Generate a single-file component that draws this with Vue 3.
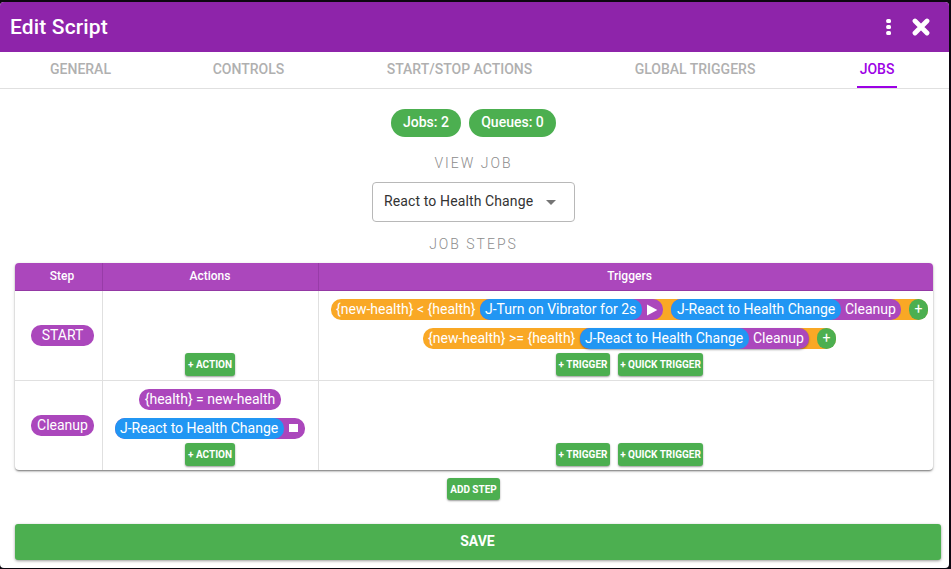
<script setup>
const tabs = [
  { label: 'GENERAL', name: 'general' },
  { label: 'CONTROLS', name: 'controls' },
  { label: 'START/STOP ACTIONS', name: 'actions' },
  { label: 'GLOBAL TRIGGERS', name: 'triggers' },
  { label: 'JOBS', name: 'jobs' },
]
const activeTab = 'jobs'
</script>

<template>
  <div class="backdrop">
    <section class="dialog">
      <header class="toolbar">
        <h1>Edit Script</h1>
        <svg class="dots" viewBox="0 0 6 18" width="6" height="18">
          <rect x="1.2" y="1" width="4.8" height="4.1" rx="1.5" />
          <rect x="1.2" y="7" width="4.8" height="4.1" rx="1.5" />
          <rect x="1.2" y="13" width="4.8" height="4.1" rx="1.5" />
        </svg>
        <svg class="close" viewBox="0 0 18 18" width="18" height="18">
          <path d="M3 3 15 15M15 3 3 15" />
        </svg>
      </header>

      <nav class="tabs">
        <div v-for="tab in tabs" :key="tab.name" class="tab" :class="[tab.name, { active: tab.name === activeTab }]">
          <span>{{ tab.label }}</span>
        </div>
      </nav>

      <main class="content">
        <div class="chips">
          <span class="chip chip-jobs">Jobs: 2</span>
          <span class="chip chip-queues">Queues: 0</span>
        </div>
        <h2 class="view-title">VIEW JOB</h2>
        <div class="select">
          <span>React to Health Change</span>
          <svg viewBox="0 0 10 5" width="10" height="5"><path d="M0 0h10L5 5z" /></svg>
        </div>
        <h2 class="steps-title">JOB STEPS</h2>

        <div class="table">
          <div class="row head">
            <div class="cell">Step</div>
            <div class="cell">Actions</div>
            <div class="cell">Triggers</div>
          </div>

          <div class="row">
            <div class="cell step"><span class="pill purple step-pill">START</span></div>
            <div class="cell stack">
              <button class="btn action-btn">+ ACTION</button>
            </div>
            <div class="cell stack">
              <div class="pill orange rule-one">
                <span class="condition">{new-health} &lt; {health}</span>
                <span class="pill purple vibrate">
                  <span class="pill blue">J-Turn on Vibrator for 2s</span>
                  <svg class="play" viewBox="0 0 11 12" width="11" height="12"><path d="M0 0.5v11L10.3 6z" /></svg>
                </span>
                <span class="pill purple react">
                  <span class="pill blue">J-React to Health Change</span>
                  <span class="target">Cleanup</span>
                </span>
                <span class="pill green plus">+</span>
              </div>
              <div class="pill orange rule-two">
                <span class="condition">{new-health} &gt;= {health}</span>
                <span class="pill purple react raised">
                  <span class="pill blue">J-React to Health Change</span>
                  <span class="target">Cleanup</span>
                </span>
                <span class="pill green plus">+</span>
              </div>
              <div class="buttons">
                <button class="btn trigger-btn">+ TRIGGER</button>
                <button class="btn quick-btn">+ QUICK TRIGGER</button>
              </div>
            </div>
          </div>

          <div class="row last">
            <div class="cell step"><span class="pill purple step-pill">Cleanup</span></div>
            <div class="cell stack">
              <span class="pill purple assign">{health} = new-health</span>
              <span class="pill purple stop-job">
                <span class="pill blue">J-React to Health Change</span>
                <i class="stop"></i>
              </span>
              <button class="btn action-btn">+ ACTION</button>
            </div>
            <div class="cell stack">
              <div class="buttons">
                <button class="btn trigger-btn">+ TRIGGER</button>
                <button class="btn quick-btn">+ QUICK TRIGGER</button>
              </div>
            </div>
          </div>
        </div>

        <button class="btn add-step">ADD STEP</button>
        <button class="save">SAVE</button>
      </main>
    </section>
  </div>
</template>

<style>
body {
  background: #0c0710;
  overflow: hidden;
}
</style>

<style scoped>
* {
  box-sizing: border-box;
}
.backdrop {
  width: 951px;
  height: 569px;
  padding: 2px 2px 1px 0;
  background: #0c0710;
  font-family: Roboto, sans-serif;
}
.dialog {
  height: 566px;
  background: #fff;
  border-radius: 4px;
  overflow: hidden;
}
.toolbar {
  display: flex;
  align-items: center;
  height: 50px;
  padding: 0 19px 0 10px;
  background: #8e24aa;
  color: #fff;
}
h1 {
  flex: 1;
  margin: 0;
  font-size: 21px;
  font-weight: 500;
  letter-spacing: 0.15px;
  line-height: 50px;
}
.dots {
  margin-right: 21px;
  fill: #fff;
}
.close {
  fill: none;
  stroke: #fff;
  stroke-width: 4.8;
  stroke-linecap: round;
}
.tabs {
  display: flex;
  height: 37px;
  border-bottom: 1px solid #e0e0e0;
}
.tab {
  display: flex;
  justify-content: center;
  color: #b0b0b0;
  font-size: 14px;
  font-weight: 500;
  line-height: 34px;
  white-space: nowrap;
}
.general { width: 161px; }
.controls { width: 175px; }
.actions { width: 247px; }
.triggers { width: 224px; }
.jobs { width: 140px; }
.active span {
  width: 40px;
  height: 36px;
  text-align: center;
  color: #9c00e5;
  border-bottom: 2px solid #9c00e5;
}
.content {
  display: flex;
  flex-direction: column;
  align-items: center;
  padding: 20px 8px 8px 15px;
}
.chips {
  display: flex;
  gap: 8px;
  margin-right: 9px;
}
.chip {
  height: 28px;
  border-radius: 14px;
  background: #4caf50;
  color: #fff;
  font-size: 14px;
  font-weight: 500;
  line-height: 27px;
  text-align: center;
}
.chip-jobs { width: 70px; }
.chip-queues { width: 87px; }
h2 {
  margin: 0;
  color: #8c8c8c;
  font-size: 14px;
  font-weight: 300;
  letter-spacing: 2px;
  line-height: 20px;
}
.view-title {
  margin: 16px 9px 9px 0;
}
.select {
  display: flex;
  align-items: center;
  justify-content: space-between;
  width: 203px;
  height: 40px;
  margin-right: 9px;
  padding: 0 18px 2px 11px;
  border: 1px solid #b8b8b8;
  border-radius: 4px;
  color: #333;
  font-size: 14px;
  letter-spacing: 0.12px;
}
.select svg {
  margin-top: 3px;
  fill: #757575;
}
.steps-title {
  margin: 12px 9px 9px 0;
}
.table {
  align-self: flex-start;
  width: 918px;
  border-radius: 4px;
  box-shadow: 0 2px 2px -1px rgba(0, 0, 0, 0.3), 0 1px 2px rgba(0, 0, 0, 0.28), 0 1px 4px rgba(0, 0, 0, 0.1);
}
.row {
  display: grid;
  grid-template-columns: 88px 216px 614px;
  height: 90px;
  border-bottom: 1px solid #e0e0e0;
}
.row.last {
  height: 89px;
  border-bottom: 0;
}
.row.head {
  height: 28px;
  border-bottom: 1px solid #9439a4;
  border-radius: 4px 4px 0 0;
  background: #ab47bc;
  color: #fff;
  font-size: 12px;
  font-weight: 500;
  line-height: 26px;
  text-align: center;
}
.cell {
  border-right: 1px solid #e0e0e0;
}
.head .cell {
  padding-right: 1px;
  border-right-color: #983ca8;
}
.head .cell:nth-child(odd) {
  padding: 0 0 0 7px;
}
.cell:last-child {
  border-right: 0;
}
.step {
  display: flex;
  align-items: center;
  justify-content: center;
  padding-left: 8px;
}
.stack {
  display: flex;
  flex-direction: column;
  align-items: center;
  justify-content: flex-end;
  gap: 8px;
  padding: 0 1px 4px 0;
}
.stack:last-child {
  padding: 0 0 4px 7px;
}
.stack > :last-child {
  margin-top: -4px;
}
.pill {
  display: flex;
  height: 21px;
  border-radius: 10px;
  color: #fff;
  font-size: 14px;
  letter-spacing: 0;
  line-height: 20px;
  white-space: nowrap;
}
.purple { background: #ab47bc; }
.blue { background: #2196f3; }
.orange { background: #f9a825; }
.green { background: #4caf50; }
.step-pill {
  width: 63px;
  justify-content: center;
}
.condition {
  padding-left: 5px;
}
.rule-one { width: 597px; }
.rule-two { width: 413px; }
.rule-one .condition { width: 149px; }
.rule-two .condition { width: 157px; }
.vibrate {
  width: 183px;
  margin-right: 8px;
}
.vibrate .blue {
  width: 162px;
  padding-left: 5px;
}
.react {
  width: 230px;
  margin-right: 8px;
}
.react .blue,
.stop-job .blue {
  width: 169px;
  padding-left: 5px;
}
.rule-two .react {
  width: 229px;
}
.rule-one .react .blue {
  width: 170px;
  padding-left: 6px;
}
.raised {
  box-shadow: 0 1px 2px rgba(0, 0, 0, 0.35);
}
.target {
  padding-left: 4px;
}
.play {
  margin: 5px 0 0 5px;
  fill: #fff;
}
.plus {
  width: 19px;
  justify-content: center;
}
.assign {
  width: 142px;
  justify-content: center;
}
.stop-job {
  width: 190px;
}
.stop {
  width: 9px;
  height: 8px;
  margin: 6px 0 0 5px;
  background: #fff;
}
.buttons {
  display: flex;
  gap: 8px;
}
.btn {
  height: 23px;
  padding: 0;
  border: 0;
  border-radius: 3px;
  background: #4caf50;
  box-shadow: 0 1px 2px rgba(0, 0, 0, 0.4);
  color: #fff;
  font: 700 10px/23px Roboto, sans-serif;
  white-space: nowrap;
}
.action-btn { width: 50px; }
.trigger-btn { width: 54px; }
.quick-btn { width: 85px; }
.add-step {
  width: 53px;
  height: 22px;
  margin: 8px 9px 24px 0;
}
.save {
  align-self: flex-start;
  width: 926px;
  height: 36px;
  padding: 0 1px 2px 0;
  border: 0;
  border-radius: 3px;
  background: #4caf50;
  box-shadow: 0 1px 3px rgba(0, 0, 0, 0.4);
  color: #fff;
  font: 700 14px Roboto, sans-serif;
}
</style>
